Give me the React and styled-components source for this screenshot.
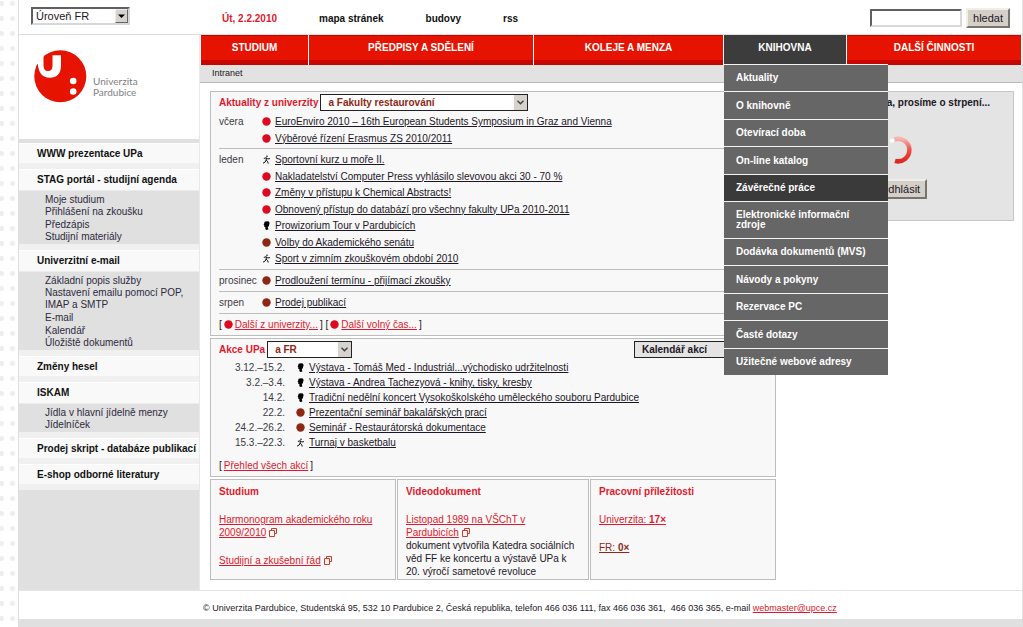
import styled, { createGlobalStyle, css } from 'styled-components'

const theme = {
  red: '#e61300',
  linkRed: '#e0182d',
  brown: '#8e2814',
  ink: '#1c1626',
  grey: '#e0e0e0',
  line: '#bdbdbd',
  panel: '#f8f8f8',
}

const GlobalStyle = createGlobalStyle`
  * {
    box-sizing: border-box;
  }
  body {
    margin: 0;
    background: #fff radial-gradient(circle, #eee 2px, transparent 3px) -4px -4px / 11px 15px;
    color: ${theme.ink};
    font: 10px/12px 'Liberation Sans', Arial, sans-serif;
  }
  ul {
    list-style: none;
    margin: 0;
    padding: 0;
  }
  h2,
  p {
    margin: 0;
    font-size: inherit;
  }
  button,
  input,
  select {
    font-family: inherit;
  }
`

const sunkenBorder = css`
  border: 2px solid;
  border-color: #606060 #d8d8d8 #d8d8d8 #606060;
`

const Page = styled.div`
  margin-left: 18px;
  border: solid #dedede;
  border-width: 0 1px;
  background: #fff;
`

const TopBar = styled.header`
  display: flex;
  align-items: center;
  height: 35px;
  padding: 0 12px;
  border-bottom: 1px solid #dedede;
`

const LevelCell = styled.div`
  display: flex;
  width: 191px;
  height: 20px;
`

const SelectFrame = styled.span`
  display: inline-flex;
  position: relative;
  width: ${(props) => props.$width};
  height: 17px;
  border: 1px solid #222;
  background: ${(props) => props.$background || '#fff'};
  ${(props) =>
    props.$classic &&
    css`
      height: 18px;
      ${sunkenBorder};
    `}
`

const Select = styled.select`
  flex: 1;
  min-width: 0;
  appearance: none;
  border: 0;
  padding: 0 16px 0 ${(props) => (props.$classic ? '3px' : '7px')};
  background: transparent;
  color: ${(props) => props.$color || theme.ink};
  font-size: ${(props) => (props.$classic ? '11px' : '10px')};
  font-weight: ${(props) => (props.$classic ? 'normal' : 'bold')};
`

const SelectArrow = styled.span`
  display: flex;
  position: absolute;
  top: 0;
  right: 0;
  bottom: 0;
  align-items: center;
  justify-content: center;
  width: 13px;
  background: #d6d3ce;
  pointer-events: none;
  ${(props) =>
    props.$classic &&
    css`
      border: 1px solid;
      border-color: #eee #666 #666 #eee;
    `}
`

const TopLinks = styled.nav`
  display: flex;
  flex: 1;
  gap: 42px;
  padding-top: 3px;
  font-weight: bold;

  a {
    color: #111;
    text-decoration: none;
  }
`

const Today = styled.span`
  color: ${theme.linkRed};
`

const SearchForm = styled.form`
  display: flex;
  align-items: center;
  gap: 4px;
  padding-top: 1px;
`

const SearchInput = styled.input`
  width: 92px;
  height: 18px;
  ${sunkenBorder};
  font-size: 10px;
`

const ClassicButton = styled.button`
  height: 20px;
  padding: 0 5px;
  border: 2px solid;
  border-color: #f0eee8 #77746e #77746e #f0eee8;
  background: #d4d0c8;
  color: ${theme.ink};
  font-size: 11px;
`

const Body = styled.div`
  display: grid;
  grid-template-columns: 181px 1fr;
`

const Sidebar = styled.aside`
  border-right: 1px solid #e8e8e8;
  background: ${theme.grey};
`

const LogoBox = styled.div`
  display: flex;
  gap: 6px;
  height: 104px;
  margin-bottom: 4px;
  padding: 15px;
  background: #fff;
`

const LogoText = styled.span`
  padding-top: 26px;
  color: #808080;
  font: 10px/11px 'Lato', sans-serif;
`

const SideSection = styled.section`
  border-bottom: 6px solid #f0f0f0;
`

const SideHeading = styled.h2`
  height: ${(props) => (props.$hasList ? '21px' : '20px')};
  padding-left: 18px;
  border-top: 1px solid #fff;
  background: #f9f9f9;
  color: #111;
  line-height: 20px;
  white-space: nowrap;
`

const SideList = styled.ul`
  display: grid;
  grid-auto-rows: 12px 13px;
  padding: 3px 0 0 26px;
  border-top: 1px solid #ececec;

  li:last-child {
    margin-bottom: -1px;
  }
  a {
    color: #2d2a3c;
    text-decoration: none;
    white-space: pre-line;
  }
`

const MenuBar = styled.ul`
  display: grid;
  grid-template-columns: 107fr 224fr 189fr 122fr 174fr;
  gap: 1px;
  height: 30px;
  padding: 0 1px;
`

const MenuItem = styled.li`
  position: relative;
  border: solid ${(props) => (props.$open ? '#3c3c3c' : '#c70600')};
  border-width: 1px 0 5px;
  background: ${(props) => (props.$open ? '#3c3c3c' : theme.red)};
  text-align: center;
  line-height: 24px;

  > a {
    display: block;
    color: #fff;
    font-weight: bold;
    text-decoration: none;
  }
`

const Submenu = styled.ul`
  display: grid;
  grid-auto-rows: minmax(27px, auto) minmax(28px, auto);
  position: absolute;
  z-index: 1;
  top: 28px;
  left: 0;
  width: 164px;
`

const SubmenuItem = styled.li`
  display: flex;
  align-items: center;
  padding: 8px 12px;
  border-top: 1px solid #f4f4f4;
  background: ${(props) => (props.$active ? '#3a3a3a' : '#666')};
  line-height: 10px;
  text-align: left;

  a {
    color: #fff;
    font-weight: bold;
    text-decoration: none;
  }
`

const Breadcrumb = styled.div`
  height: 18px;
  padding-left: 12px;
  border-bottom: 1px solid #b8b8b8;
  background: #e2e2e2;
  font-size: 9px;
  line-height: 16px;
`

const Columns = styled.div`
  display: grid;
  grid-template-columns: 566fr 228fr;
  align-items: start;
  gap: 10px;
  padding: 8px 8px 10px 10px;
`

const MainColumn = styled.main`
  display: grid;
  gap: 2px;
`

const Panel = styled.section`
  padding: 2px 8px 0;
  border: 1px solid ${theme.line};
  background: ${theme.panel};
`

const PanelHeader = styled.div`
  display: flex;
  align-items: center;
  gap: 2px;
`

const PanelTitle = styled.h2`
  color: ${theme.linkRed};
`

const CalendarCell = styled.span`
  display: flex;
  margin-left: auto;
`

const NewsGroup = styled.div`
  display: grid;
  grid-template-columns: 43px 1fr;
  padding: 2px 0;
  border-bottom: 1px solid ${theme.line};
  color: #3c3a46;
  line-height: 17px;
`

const NewsList = styled.ul`
  display: grid;
  grid-auto-rows: 17px 16px;
`

const IconRow = styled.li`
  display: flex;
  align-items: center;
  gap: 4px;
`

const TextLink = styled.a`
  color: ${(props) => props.$color || theme.ink};
`

const MoreLinks = styled.p`
  display: flex;
  align-items: center;
  gap: 2px;
  padding-top: ${(props) => (props.$spaced ? '5px' : '0')};
  line-height: 21px;
`

const EventTable = styled.table`
  margin-top: 2px;
  border-collapse: collapse;

  td {
    height: 15px;
    padding: 0;
    line-height: 15px;
  }
  td:first-child {
    width: 66px;
    color: #3c3a46;
    text-align: right;
  }
  td:nth-child(2) {
    width: 24px;
    padding-left: 11px;
  }
`

const IconBox = styled.svg`
  display: block;
  flex: none;
  width: 9px;
  height: 9px;
`

const Cards = styled.div`
  display: grid;
  grid-template-columns: 186fr 192fr 186fr;
  gap: 1px;
`

const Card = styled(Panel)`
  min-height: 101px;
  padding-top: 5px;
  line-height: 13px;

  h2,
  p + p {
    margin: 0 0 15px;
  }
  p + p {
    margin: 15px 0 0;
  }
`

const LoginBox = styled.section`
  display: flex;
  flex-direction: column;
  align-items: center;
  height: 130px;
  padding-top: 5px;
  border: 1px solid #c6c6c6;
  background: #e4e4e4;
  font-weight: bold;
`

const Spinner = styled.svg`
  width: 28px;
  height: 28px;
  margin: 27px 4px 15px 0;
`

const Footer = styled.footer`
  height: 29px;
  padding-left: 184px;
  border-top: 1px solid #e4e4e4;
  font-size: 9px;
  line-height: 34px;
  white-space: pre;
`

const BottomStrip = styled.div`
  height: 8px;
  background: ${theme.grey};
`

const Icon = ({ kind }) => {
  if (kind === 'run') {
    return (
      <IconBox viewBox="0 0 9 9" fill="none" stroke="#111" strokeWidth="1">
        <circle cx="5" cy="1.2" r="0.8" fill="#111" stroke="none" />
        <path d="M1.8 3.4 4.4 2.8 5.6 4 8 3.6M4.6 2.8 4 5.2 5.6 6.4 6.2 8.6M4 5.2 3.2 7 1 8.2" />
      </IconBox>
    )
  }
  if (kind === 'culture') {
    return (
      <IconBox viewBox="0 0 9 9" fill="#000">
        <path d="M2.6 .8Q4.8 -.2 6.8 .6 8 1.8 7.2 3.6L6.8 5.4 5.8 5.8 6 7 6.4 8.4 4.4 9 3.2 8 3.6 6.4 2.2 5.8 2.4 4.6 1.6 3.8 2.2 2.6Z" />
      </IconBox>
    )
  }
  return (
    <IconBox viewBox="0 0 9 9">
      <circle cx="4.5" cy="4.5" r="4.2" fill={kind === 'faculty' ? theme.brown : '#dc0a20'} />
    </IconBox>
  )
}

const WindowMark = styled.svg`
  width: 8px;
  height: 9px;
  vertical-align: -1px;
`

const NewWindow = () => (
  <WindowMark viewBox="0 0 8 9" fill="none" stroke="#d03a2c">
    <path d="M2.5 2.5V.5H7.5V5.5H5.5M.5 2.5H5.5V8.5H.5Z" />
  </WindowMark>
)

const Picker = ({ label, value, width, classic = false, color, background }) => (
  <SelectFrame $width={width} $classic={classic} $background={background}>
    <Select aria-label={label} $classic={classic} $color={color}>
      <option>{value}</option>
    </Select>
    <SelectArrow $classic={classic}>
      <svg width="7" height="5" viewBox="0 0 7 5">
        {classic ? (
          <path d="M0 .5H7L3.5 4Z" />
        ) : (
          <path d="M.5 .8 3.5 3.8 6.5 .8" fill="none" stroke="#444" strokeWidth="1.5" />
        )}
      </svg>
    </SelectArrow>
  </SelectFrame>
)

const Logo = () => (
  <svg width="53" height="53" viewBox="0 0 53 53">
    <circle cx="26.3" cy="26.3" r="26" fill={theme.red} />
    <path
      d="M0 0H9.5V15Q9.5 21 14 21 18.5 21 18.5 15.5V5.3H27V15Q27 27.7 15.5 27.7 5 27.7 3.8 14L0 14Z"
      fill="#fff"
    />
    <circle cx="39.2" cy="31" r="3.3" fill="#fff" />
    <circle cx="39.2" cy="41.5" r="3.3" fill="#fff" />
  </svg>
)

const sections = [
  { title: 'WWW prezentace UPa' },
  {
    title: 'STAG portál - studijní agenda',
    links: ['Moje studium', 'Přihlášení na zkoušku', 'Předzápis', 'Studijní materiály'],
  },
  {
    title: 'Univerzitní e-mail',
    links: [
      'Základní popis služby',
      'Nastavení emailu pomocí POP,\nIMAP a SMTP',
      'E-mail',
      'Kalendář',
      'Úložiště dokumentů',
    ],
  },
  { title: 'Změny hesel' },
  { title: 'ISKAM', links: ['Jídla v hlavní jídelně menzy', 'Jídelníček'] },
  { title: 'Prodej skript - databáze publikací' },
  { title: 'E-shop odborné literatury' },
]

const menu = ['STUDIUM', 'PŘEDPISY A SDĚLENÍ', 'KOLEJE A MENZA', 'KNIHOVNA', 'DALŠÍ ČINNOSTI']

const libraryMenu = [
  'Aktuality',
  'O knihovně',
  'Otevírací doba',
  'On-line katalog',
  'Závěrečné práce',
  'Elektronické informační zdroje',
  'Dodávka dokumentů (MVS)',
  'Návody a pokyny',
  'Rezervace PC',
  'Časté dotazy',
  'Užitečné webové adresy',
]

const news = [
  {
    month: 'včera',
    items: [
      ['university', 'EuroEnviro 2010 – 16th European Students Symposium in Graz and Vienna'],
      ['university', 'Výběrové řízení Erasmus ZS 2010/2011'],
    ],
  },
  {
    month: 'leden',
    items: [
      ['run', 'Sportovní kurz u moře II.'],
      ['university', 'Nakladatelství Computer Press vyhlásilo slevovou akci 30 - 70 %'],
      ['university', 'Změny v přístupu k Chemical Abstracts!'],
      ['university', 'Obnovený přístup do databází pro všechny fakulty UPa 2010-2011'],
      ['culture', 'Prowizorium Tour v Pardubicích'],
      ['faculty', 'Volby do Akademického senátu'],
      ['run', 'Sport v zimním zkouškovém období 2010'],
    ],
  },
  { month: 'prosinec', items: [['faculty', 'Prodloužení termínu - přijímací zkoušky']] },
  { month: 'srpen', items: [['faculty', 'Prodej publikací']] },
]

const events = [
  ['3.12.–15.2.', 'culture', 'Výstava - Tomáš Med - Industriál...východisko udržitelnosti'],
  ['3.2.–3.4.', 'culture', 'Výstava - Andrea Tachezyová - knihy, tisky, kresby'],
  ['14.2.', 'culture', 'Tradiční nedělní koncert Vysokoškolského uměleckého souboru Pardubice'],
  ['22.2.', 'faculty', 'Prezentační seminář bakalářských prací'],
  ['24.2.–26.2.', 'faculty', 'Seminář - Restaurátorská dokumentace'],
  ['15.3.–22.3.', 'run', 'Turnaj v basketbalu'],
]

const App = () => (
  <>
    <GlobalStyle />
    <Page>
      <TopBar>
        <LevelCell>
          <Picker classic label="Úroveň" value="Úroveň FR" width="99px" />
        </LevelCell>
        <TopLinks>
          <Today>Út, 2.2.2010</Today>
          <a href="#mapa">mapa stránek</a>
          <a href="#budovy">budovy</a>
          <a href="#rss">rss</a>
        </TopLinks>
        <SearchForm>
          <SearchInput type="text" aria-label="Hledaný výraz" />
          <ClassicButton type="button">hledat</ClassicButton>
        </SearchForm>
      </TopBar>
      <Body>
        <Sidebar>
          <LogoBox>
            <Logo />
            <LogoText>
              Univerzita
              <br />
              Pardubice
            </LogoText>
          </LogoBox>
          {sections.map(({ title, links }) => (
            <SideSection key={title}>
              <SideHeading $hasList={Boolean(links)}>{title}</SideHeading>
              {links && (
                <SideList>
                  {links.map((link) => (
                    <li key={link} style={{ gridRow: `span ${link.split('\n').length}` }}>
                      <a href="#odkaz">{link}</a>
                    </li>
                  ))}
                </SideList>
              )}
            </SideSection>
          ))}
        </Sidebar>
        <div>
          <MenuBar>
            {menu.map((title) => (
              <MenuItem key={title} $open={title === 'KNIHOVNA'}>
                <a href="#menu">{title}</a>
                {title === 'KNIHOVNA' && (
                  <Submenu>
                    {libraryMenu.map((item) => (
                      <SubmenuItem key={item} $active={item === 'Závěrečné práce'}>
                        <a href="#knihovna">{item}</a>
                      </SubmenuItem>
                    ))}
                  </Submenu>
                )}
              </MenuItem>
            ))}
          </MenuBar>
          <Breadcrumb>Intranet</Breadcrumb>
          <Columns>
            <MainColumn>
              <Panel>
                <PanelHeader>
                  <PanelTitle>Aktuality z univerzity</PanelTitle>
                  <Picker
                    label="Fakulta"
                    value="a Fakulty restaurování"
                    width="208px"
                    color={theme.brown}
                  />
                </PanelHeader>
                {news.map(({ month, items }) => (
                  <NewsGroup key={month}>
                    <span>{month}</span>
                    <NewsList>
                      {items.map(([kind, text]) => (
                        <IconRow key={text}>
                          <Icon kind={kind} />
                          <TextLink href="#aktualita">{text}</TextLink>
                        </IconRow>
                      ))}
                    </NewsList>
                  </NewsGroup>
                ))}
                <MoreLinks>
                  [ <Icon kind="university" />
                  <TextLink href="#dalsi" $color={theme.linkRed}>
                    Další z univerzity...
                  </TextLink>
                  ] [ <Icon kind="university" />
                  <TextLink href="#volny-cas" $color={theme.linkRed}>
                    Další volný čas...
                  </TextLink>
                  ]
                </MoreLinks>
              </Panel>
              <Panel>
                <PanelHeader>
                  <PanelTitle>Akce UPa</PanelTitle>
                  <Picker label="Akce" value="a FR" width="85px" color={theme.brown} />
                  <CalendarCell>
                    <Picker
                      label="Kalendář"
                      value="Kalendář akcí"
                      width="133px"
                      background="#e4e4e4"
                    />
                  </CalendarCell>
                </PanelHeader>
                <EventTable>
                  <tbody>
                    {events.map(([date, kind, text]) => (
                      <tr key={date}>
                        <td>{date}</td>
                        <td>
                          <Icon kind={kind} />
                        </td>
                        <td>
                          <TextLink href="#akce">{text}</TextLink>
                        </td>
                      </tr>
                    ))}
                  </tbody>
                </EventTable>
                <MoreLinks $spaced>
                  [
                  <TextLink href="#prehled" $color={theme.linkRed}>
                    Přehled všech akcí
                  </TextLink>
                  ]
                </MoreLinks>
              </Panel>
              <Cards>
                <Card>
                  <PanelTitle>Studium</PanelTitle>
                  <p>
                    <TextLink href="#harmonogram" $color={theme.linkRed}>
                      Harmonogram akademického roku 2009/2010
                    </TextLink>{' '}
                    <NewWindow />
                  </p>
                  <p>
                    <TextLink href="#rad" $color={theme.linkRed}>
                      Studijní a zkušební řád
                    </TextLink>{' '}
                    <NewWindow />
                  </p>
                </Card>
                <Card>
                  <PanelTitle>Videodokument</PanelTitle>
                  <p>
                    <TextLink href="#listopad" $color={theme.linkRed}>
                      Listopad 1989 na VŠChT v<br />
                      Pardubicích
                    </TextLink>{' '}
                    <NewWindow />
                    <br />
                    dokument vytvořila Katedra sociálních věd FF ke koncertu a výstavě UPa k 20.
                    výročí sametové revoluce
                  </p>
                </Card>
                <Card>
                  <PanelTitle>Pracovní příležitosti</PanelTitle>
                  <p>
                    <TextLink href="#prace" $color={theme.linkRed}>
                      Univerzita: <b>17×</b>
                    </TextLink>
                  </p>
                  <p>
                    <TextLink href="#prace-fr" $color={theme.brown}>
                      FR: <b>0×</b>
                    </TextLink>
                  </p>
                </Card>
              </Cards>
            </MainColumn>
            <LoginBox>
              Načítá se stránka, prosíme o strpení...
              <Spinner viewBox="0 0 28 28" fill="none" strokeWidth="4.5">
                <defs>
                  <linearGradient id="spin" x1="0" y1="0" x2="0" y2="1">
                    <stop offset="0" stopColor="#f6b4b0" />
                    <stop offset="0.5" stopColor="#ea5048" />
                    <stop offset="1" stopColor="#dd2a20" />
                  </linearGradient>
                </defs>
                <circle cx="8" cy="4.6" r="2.2" fill="#fff" />
                <path d="M10.5 3.3A11.3 11.3 0 1 1 11 24.9" stroke="url(#spin)" />
              </Spinner>
              <ClassicButton type="button">Odhlásit</ClassicButton>
            </LoginBox>
          </Columns>
        </div>
      </Body>
      <Footer>
        © Univerzita Pardubice, Studentská 95, 532 10 Pardubice 2, Česká republika, telefon 466 036
        111, fax 466 036 361,{'  '}466 036 365, e-mail{' '}
        <TextLink href="mailto:webmaster@upce.cz" $color={theme.linkRed}>
          webmaster@upce.cz
        </TextLink>
      </Footer>
      <BottomStrip />
    </Page>
  </>
)

export default App
